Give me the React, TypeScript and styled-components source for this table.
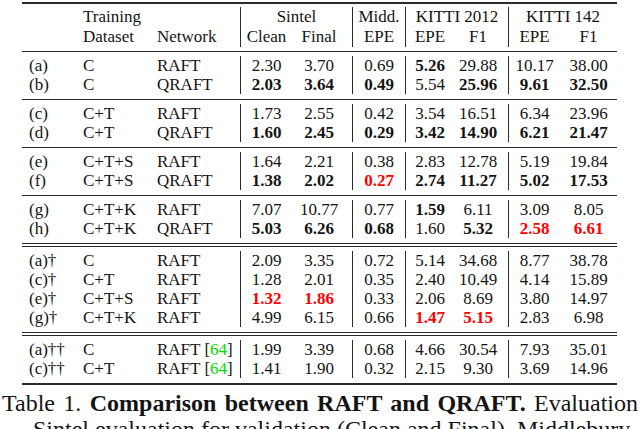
import styled, { createGlobalStyle } from "styled-components";

const SERIF = `"Liberation Serif", Tinos, "Times New Roman", Times, "DejaVu Serif", serif`;

const GlobalStyle = createGlobalStyle`
  html, body {
    margin: 0;
    padding: 0;
    background: #ffffff;
  }
  body {
    font-family: ${SERIF};
    color: #141414;
  }
`;

const COLS = "56px 72px 90px 52px 60px 53px 49px 54px 52px 57px";
const LINE = "#2a2a2a";

const Page = styled.div`
  width: 640px;
  height: 429px;
  overflow: hidden;
  padding-top: 2px;
  box-sizing: border-box;
`;

const Table = styled.div`
  width: 595px;
  margin-left: 22px;
  font-family: ${SERIF};
  font-size: 17px;
`;

const Rule = styled.div<{ $kind?: "thick" | "thin" | "double" }>`
  box-sizing: border-box;
  height: ${(p) => (p.$kind === "thick" ? 2 : p.$kind === "double" ? 4 : 1)}px;
  background: ${(p) => (p.$kind === "double" ? "transparent" : LINE)};
  border-top: ${(p) => (p.$kind === "double" ? `1px solid ${LINE}` : "none")};
  border-bottom: ${(p) => (p.$kind === "double" ? `1px solid ${LINE}` : "none")};
`;

const Group = styled.div<{ $top?: number; $bottom?: number }>`
  padding: ${(p) => p.$top ?? 4}px 0 ${(p) => p.$bottom ?? 5}px;
`;

const Row = styled.div<{ $h?: number }>`
  display: grid;
  grid-template-columns: ${COLS};
  height: ${(p) => p.$h ?? 19}px;
  line-height: ${(p) => p.$h ?? 19}px;
`;

const Cell = styled.div<{
  $line?: boolean;
  $left?: boolean;
  $span?: number;
  $bold?: boolean;
  $red?: boolean;
  $pl?: number;
  $pr?: number;
}>`
  box-sizing: border-box;
  grid-column: span ${(p) => p.$span ?? 1};
  border-left: ${(p) => (p.$line ? `1px solid ${LINE}` : "none")};
  text-align: ${(p) => (p.$left ? "left" : "center")};
  padding-left: ${(p) => p.$pl ?? 0}px;
  padding-right: ${(p) => p.$pr ?? 0}px;
  font-weight: ${(p) => (p.$bold ? 700 : 400)};
  color: ${(p) => (p.$red ? "#ff0000" : "inherit")};
  white-space: nowrap;
`;

const Cite = styled.span`
  color: #00dd00;
`;

const Caption = styled.div`
  font-family: ${SERIF};
  font-size: 24px;
  line-height: 26px;
  margin-top: 5px;
`;

const CaptionLine = styled.div<{ $indent?: number; $fill?: boolean }>`
  margin-left: ${(p) => p.$indent ?? 0}px;
  width: ${(p) => (p.$fill ? "636px" : "auto")};
  white-space: ${(p) => (p.$fill ? "normal" : "nowrap")};
  text-align: ${(p) => (p.$fill ? "justify" : "left")};
  text-align-last: ${(p) => (p.$fill ? "justify" : "auto")};
`;

// "*" = bold, "#" = bold red
type Entry = { label: string; data: string; net: string; cite?: boolean; vals: string[] };

const groups: Entry[][] = [
  [
    { label: "(a)", data: "C", net: "RAFT", vals: ["2.30", "3.70", "0.69", "*5.26", "29.88", "10.17", "38.00"] },
    { label: "(b)", data: "C", net: "QRAFT", vals: ["*2.03", "*3.64", "*0.49", "5.54", "*25.96", "*9.61", "*32.50"] },
  ],
  [
    { label: "(c)", data: "C+T", net: "RAFT", vals: ["1.73", "2.55", "0.42", "3.54", "16.51", "6.34", "23.96"] },
    { label: "(d)", data: "C+T", net: "QRAFT", vals: ["*1.60", "*2.45", "*0.29", "*3.42", "*14.90", "*6.21", "*21.47"] },
  ],
  [
    { label: "(e)", data: "C+T+S", net: "RAFT", vals: ["1.64", "2.21", "0.38", "2.83", "12.78", "5.19", "19.84"] },
    { label: "(f)", data: "C+T+S", net: "QRAFT", vals: ["*1.38", "*2.02", "#0.27", "*2.74", "*11.27", "*5.02", "*17.53"] },
  ],
  [
    { label: "(g)", data: "C+T+K", net: "RAFT", vals: ["7.07", "10.77", "0.77", "*1.59", "6.11", "3.09", "8.05"] },
    { label: "(h)", data: "C+T+K", net: "QRAFT", vals: ["*5.03", "*6.26", "*0.68", "1.60", "*5.32", "#2.58", "#6.61"] },
  ],
  [
    { label: "(a)†", data: "C", net: "RAFT", vals: ["2.09", "3.35", "0.72", "5.14", "34.68", "8.77", "38.78"] },
    { label: "(c)†", data: "C+T", net: "RAFT", vals: ["1.28", "2.01", "0.35", "2.40", "10.49", "4.14", "15.89"] },
    { label: "(e)†", data: "C+T+S", net: "RAFT", vals: ["#1.32", "#1.86", "0.33", "2.06", "8.69", "3.80", "14.97"] },
    { label: "(g)†", data: "C+T+K", net: "RAFT", vals: ["4.99", "6.15", "0.66", "#1.47", "#5.15", "2.83", "6.98"] },
  ],
  [
    { label: "(a)††", data: "C", net: "RAFT", cite: true, vals: ["1.99", "3.39", "0.68", "4.66", "30.54", "7.93", "35.01"] },
    { label: "(c)††", data: "C+T", net: "RAFT", cite: true, vals: ["1.41", "1.90", "0.32", "2.15", "9.30", "3.69", "14.96"] },
  ],
];

// separators drawn before each group
const ruleBefore: ("thin" | "double")[] = ["thin", "thin", "thin", "thin", "double", "double"];

// per numeric column: vertical line on the left, right padding
const numCols = [
  { line: true, pr: 0 },
  { line: false, pr: 6 },
  { line: true, pr: 0 },
  { line: true, pr: 0 },
  { line: false, pr: 6 },
  { line: true, pr: 0 },
  { line: false, pr: 0 },
];

function Value({ raw, idx }: { raw: string; idx: number }) {
  const bold = raw.startsWith("*") || raw.startsWith("#");
  const red = raw.startsWith("#");
  const text = bold ? raw.slice(1) : raw;
  return (
    <Cell $line={numCols[idx].line} $pr={numCols[idx].pr} $bold={bold} $red={red}>
      {text}
    </Cell>
  );
}

export default function App() {
  return (
    <Page>
      <GlobalStyle />
      <Table>
        <Rule $kind="thick" />
        <Group $top={3} $bottom={4}>
          <Row $h={20}>
            <Cell />
            <Cell $left $pl={5}>Training</Cell>
            <Cell />
            <Cell $line $span={2}>Sintel</Cell>
            <Cell $line>Midd.</Cell>
            <Cell $line $span={2}>KITTI 2012</Cell>
            <Cell $line $span={2}>KITTI 142</Cell>
          </Row>
          <Row $h={20}>
            <Cell />
            <Cell $left $pl={5}>Dataset</Cell>
            <Cell $left $pl={7}>Network</Cell>
            <Cell $line>Clean</Cell>
            <Cell $pr={6}>Final</Cell>
            <Cell $line>EPE</Cell>
            <Cell $line>EPE</Cell>
            <Cell $pr={6}>F1</Cell>
            <Cell $line>EPE</Cell>
            <Cell>F1</Cell>
          </Row>
        </Group>
        {groups.map((rows, g) => (
          <div key={g}>
            <Rule $kind={ruleBefore[g]} />
            <Group>
              {rows.map((r) => (
                <Row key={r.label}>
                  <Cell $left $pl={7}>{r.label}</Cell>
                  <Cell $left $pl={5}>{r.data}</Cell>
                  <Cell $left $pl={7}>
                    {r.net}
                    {r.cite && (
                      <>
                        {" ["}
                        <Cite>64</Cite>
                        {"]"}
                      </>
                    )}
                  </Cell>
                  {r.vals.map((v, i) => (
                    <Value key={i} raw={v} idx={i} />
                  ))}
                </Row>
              ))}
            </Group>
          </div>
        ))}
        <Rule $kind="thick" />
      </Table>
      <Caption>
        <CaptionLine $fill $indent={2}>
          Table 1. <b>Comparison between RAFT and QRAFT.</b> Evaluation
        </CaptionLine>
        <CaptionLine $indent={33}>
          Sintel evaluation for validation (Clean and Final), Middlebury
        </CaptionLine>
      </Caption>
    </Page>
  );
}
